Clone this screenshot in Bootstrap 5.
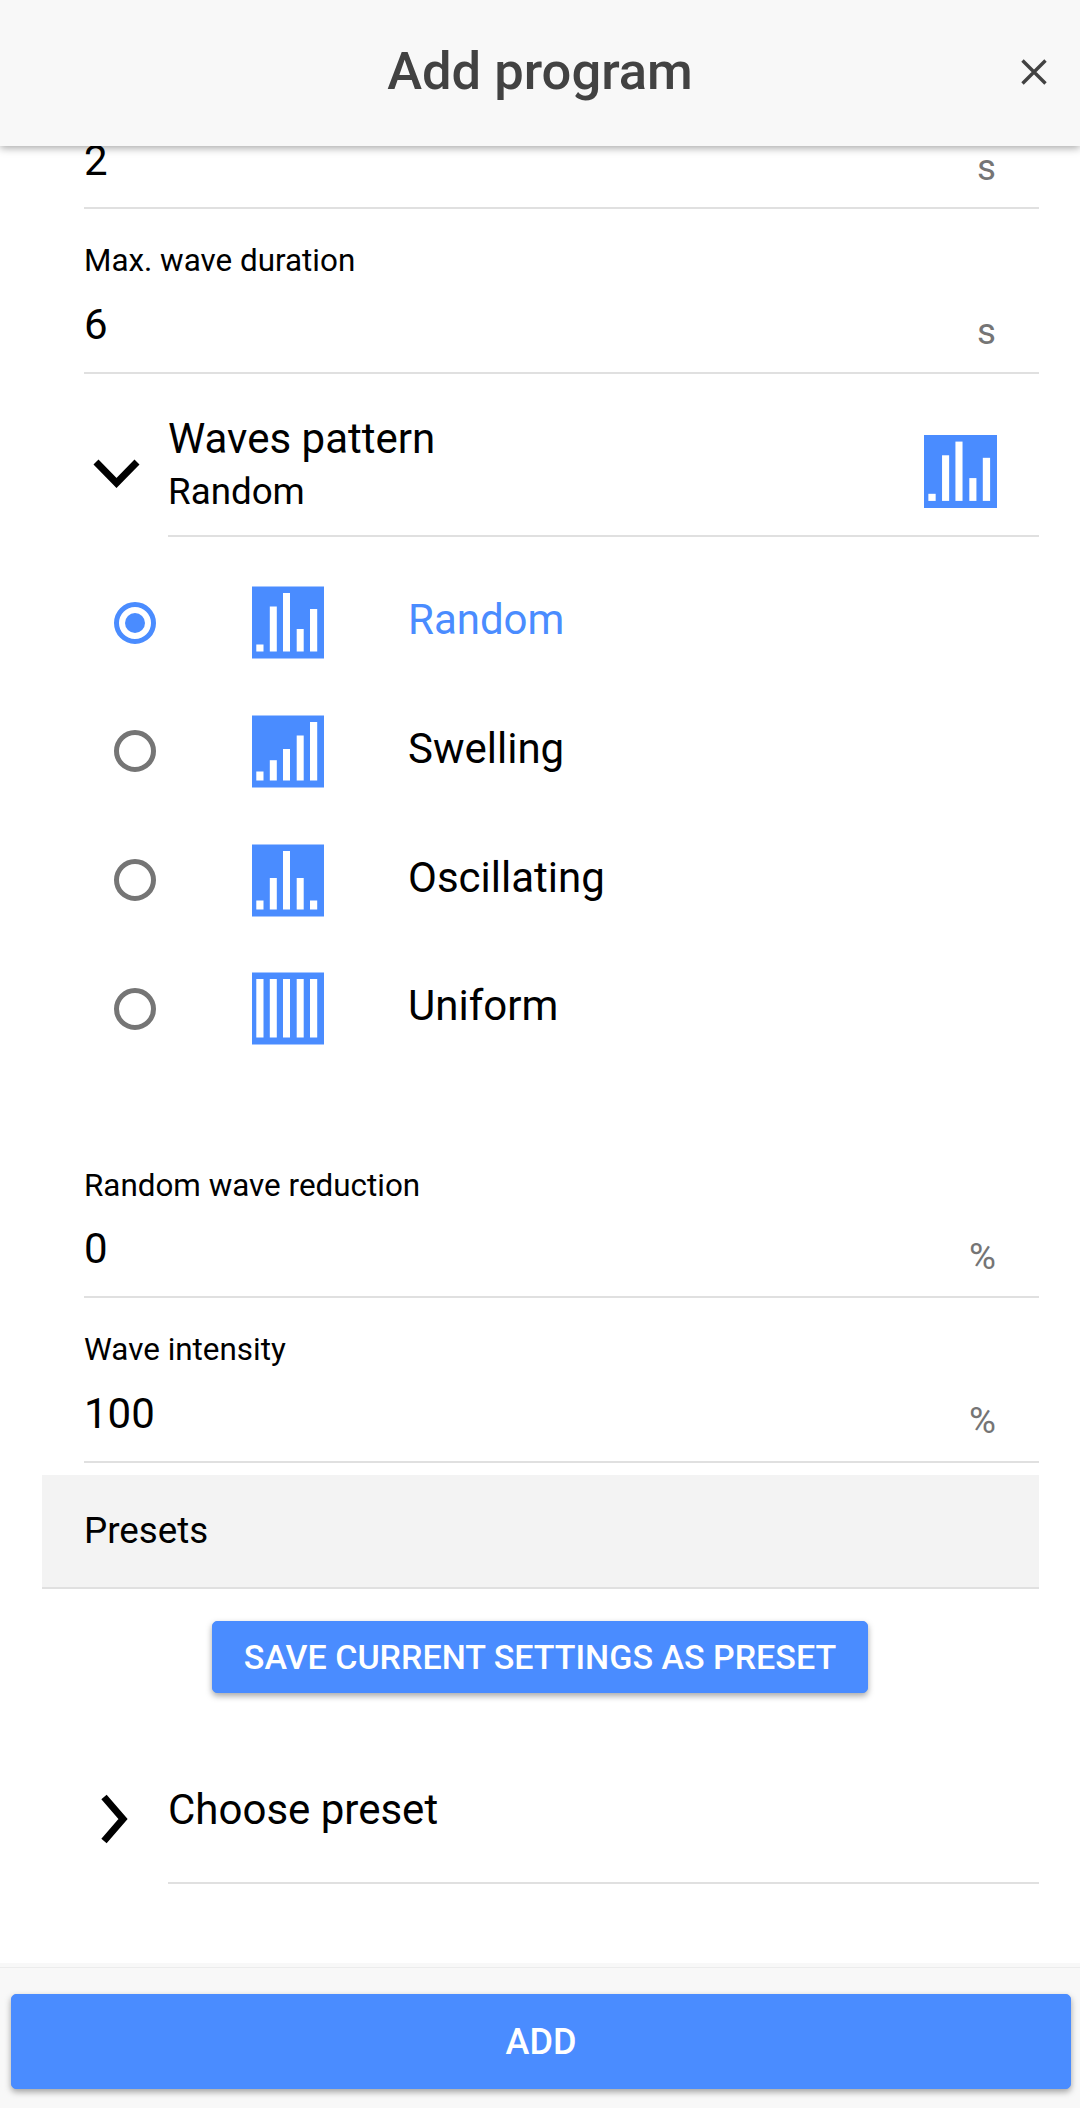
<!DOCTYPE html>
<html lang="en">
<head>
<meta charset="utf-8">
<title>Add program</title>
<link href="https://cdn.jsdelivr.net/npm/bootstrap@5.3.0/dist/css/bootstrap.min.css" rel="stylesheet">
<style>
html,body{margin:0;height:2108px;overflow:hidden;background:#fff}
body{font-family:Roboto,"Liberation Sans",sans-serif;color:#000}
.shell{height:2108px}
.topbar{height:146px;background:#f8f8f8;box-shadow:0 2px 8px rgba(0,0,0,.35);z-index:2;position:relative;color:#424242}
.topbar h1{font-size:52.5px;font-weight:500;margin:0;line-height:1;padding-bottom:4px}
.closer{position:absolute;right:33px;top:59px;width:26px;height:26px;padding:0;background:none;border:0}
.scroller{min-height:0;overflow:hidden}
.pane{padding:0 41px 0 84px}
.firstfield{height:63.3px;border-bottom:2px solid #e0e0e0;align-items:flex-end}
.firstfield .valtext{position:relative;top:-21.6px}
.firstfield .unit{position:relative;top:-14px}
.field{height:164.5px;border-bottom:2px solid #e0e0e0;padding-top:34px}
.lbl{font-size:31.4px;line-height:36px;height:36px}
.valrow{margin-top:20.5px;height:50px}
.valtext{font-size:42px;line-height:50px}
.unit{font-size:36.75px;line-height:50px;color:#757575;margin-right:43px;position:relative;top:7.5px}
.exp-head{height:163px}
.exp-head .exp-chev,.exp-head .exp-body{padding-top:35px}
.exp-chev{width:84px;flex:none}
.exp-body{border-bottom:2px solid #e0e0e0;height:100%;padding-right:42px}
.exp-text{margin-top:-16px}
.ttl{font-size:42px;line-height:50px}
.subttl{font-size:36.75px;line-height:44px;margin-top:6px}
.pat{width:73px;height:73px;display:block;flex:none}
.opts{padding-top:21.7px;padding-bottom:60.5px}
.opt{height:128.67px}
.rad{width:42px;height:42px;border-radius:50%;border:5px solid #757575;margin-left:30px;margin-right:96px;flex:none;padding:6px;box-sizing:border-box}
.rad.on{border-color:#4a8cff}
.rad.on::after{content:"";display:block;width:20px;height:20px;border-radius:50%;background:#4a8cff}
.opt .pat{margin-right:84px;width:72px;height:73px}
.opt span{font-size:42px;line-height:50px;position:relative;top:-2.6px}
.opt.sel span{color:#4a8cff}
.presethead{margin:12px 0 0 -42px;height:114px;background:#f3f3f3;border-bottom:2px solid #e0e0e0;padding-left:42px;font-size:36.75px}
.bluebtn{--bs-btn-bg:#4a8cff;--bs-btn-border-color:#4a8cff;--bs-btn-color:#fff;--bs-btn-hover-bg:#4a8cff;--bs-btn-hover-color:#fff;--bs-btn-hover-border-color:#4a8cff;font-weight:500;text-transform:uppercase;border-radius:5px;box-shadow:0 3px 6px rgba(0,0,0,.35);font-size:34px;line-height:1;padding:0}
.savebtn{width:656px;height:72px;margin:32px 0 0 128px;display:block}
.choose{margin-top:54px;height:137px}
.choose .exp-chev{padding-top:8px}
.choose .exp-body{height:100%;padding-top:38.5px}
.footbar{height:141px;background:#f8f8f8;border-top:1px solid #ececec;box-shadow:0 -4px 0 #f8f8f8;padding:26px 9px 19px 11px;z-index:2;position:relative}
.addbtn{width:100%;height:95px;font-size:36px}
</style>
</head>
<body>
<div class="shell d-flex flex-column">
  <header class="topbar d-flex align-items-center justify-content-center flex-shrink-0">
    <h1>Add program</h1>
    <button class="closer" type="button" aria-label="Close"><svg width="26" height="26" viewBox="0 0 26 26"><path d="M1.5 1.5 24.5 24.5M24.5 1.5 1.5 24.5" stroke="#424242" stroke-width="3.4" fill="none"/></svg></button>
  </header>
  <main class="scroller flex-grow-1">
    <div class="pane">
      <div class="firstfield d-flex justify-content-between">
        <span class="valtext">2</span><span class="unit">s</span>
      </div>
      <div class="field">
        <div class="lbl">Max. wave duration</div>
        <div class="valrow d-flex justify-content-between"><span class="valtext">6</span><span class="unit">s</span></div>
      </div>
      <div class="exp-head d-flex">
        <div class="exp-chev d-flex align-items-center"><svg class="ms-2" width="49" height="30" viewBox="0 0 49 30"><path d="M4 4 24.5 25 45 4" fill="none" stroke="#000" stroke-width="7"/></svg></div>
        <div class="exp-body flex-grow-1 d-flex justify-content-between align-items-center">
          <div class="exp-text"><div class="ttl">Waves pattern</div><div class="subttl">Random</div></div>
          <svg class="pat" viewBox="0 0 72 72"><rect width="72" height="72" fill="#4a8cff"/><g fill="#fff"><rect x="4.3" y="58" width="7.2" height="7"/><rect x="17.8" y="20" width="7" height="45"/><rect x="31" y="6.5" width="7" height="58.5"/><rect x="44.7" y="42.5" width="7" height="22.5"/><rect x="58" y="22.5" width="7.2" height="42.5"/></g></svg>
        </div>
      </div>
      <div class="opts">
        <div class="opt sel d-flex align-items-center">
          <div class="rad on"></div>
          <svg class="pat" viewBox="0 0 72 72"><rect width="72" height="72" fill="#4a8cff"/><g fill="#fff"><rect x="4.3" y="58" width="7.2" height="7"/><rect x="17.8" y="20" width="7" height="45"/><rect x="31" y="6.5" width="7" height="58.5"/><rect x="44.7" y="42.5" width="7" height="22.5"/><rect x="58" y="22.5" width="7.2" height="42.5"/></g></svg>
          <span>Random</span>
        </div>
        <div class="opt d-flex align-items-center">
          <div class="rad"></div>
          <svg class="pat" viewBox="0 0 72 72"><rect width="72" height="72" fill="#4a8cff"/><g fill="#fff"><rect x="4.3" y="56" width="7.2" height="9"/><rect x="17.8" y="44.7" width="7" height="20.3"/><rect x="31" y="33.5" width="7" height="31.5"/><rect x="44.7" y="20" width="7" height="45"/><rect x="58" y="6.5" width="7.2" height="58.5"/></g></svg>
          <span>Swelling</span>
        </div>
        <div class="opt d-flex align-items-center">
          <div class="rad"></div>
          <svg class="pat" viewBox="0 0 72 72"><rect width="72" height="72" fill="#4a8cff"/><g fill="#fff"><rect x="4.3" y="56" width="7.2" height="9"/><rect x="17.8" y="33.5" width="7" height="31.5"/><rect x="31" y="6.5" width="7" height="58.5"/><rect x="44.7" y="33.5" width="7" height="31.5"/><rect x="58" y="56" width="7.2" height="9"/></g></svg>
          <span>Oscillating</span>
        </div>
        <div class="opt d-flex align-items-center">
          <div class="rad"></div>
          <svg class="pat" viewBox="0 0 72 72"><rect width="72" height="72" fill="#4a8cff"/><g fill="#fff"><rect x="4.3" y="6.5" width="7.2" height="58.5"/><rect x="17.8" y="6.5" width="7" height="58.5"/><rect x="31" y="6.5" width="7" height="58.5"/><rect x="44.7" y="6.5" width="7" height="58.5"/><rect x="58" y="6.5" width="7.2" height="58.5"/></g></svg>
          <span>Uniform</span>
        </div>
      </div>
      <div class="field">
        <div class="lbl">Random wave reduction</div>
        <div class="valrow d-flex justify-content-between"><span class="valtext">0</span><span class="unit">%</span></div>
      </div>
      <div class="field">
        <div class="lbl">Wave intensity</div>
        <div class="valrow d-flex justify-content-between"><span class="valtext">100</span><span class="unit">%</span></div>
      </div>
      <div class="presethead d-flex align-items-center">Presets</div>
      <button class="btn bluebtn savebtn" type="button">Save current settings as preset</button>
      <div class="choose d-flex">
        <div class="exp-chev d-flex align-items-center"><svg class="ms-3" width="34" height="52" viewBox="0 0 34 52"><path d="M4 4 23 26 4 48" fill="none" stroke="#000" stroke-width="7"/></svg></div>
        <div class="exp-body flex-grow-1"><div class="ttl">Choose preset</div></div>
      </div>
    </div>
  </main>
  <footer class="footbar flex-shrink-0">
    <button class="btn bluebtn addbtn" type="button">Add</button>
  </footer>
</div>
<script src="https://cdn.jsdelivr.net/npm/bootstrap@5.3.0/dist/js/bootstrap.bundle.min.js"></script>
</body>
</html>
